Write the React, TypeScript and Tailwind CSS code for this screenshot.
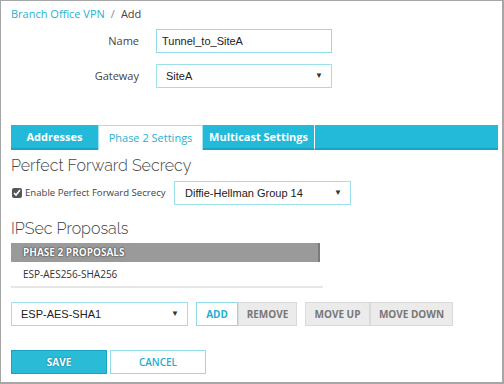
import React from "react";

const Caret = () => (
  <span className="text-[8px] text-[#333] leading-none">▼</span>
);

function Select({ value, w, className = "" }: { value: string; w: string; className?: string }) {
  return (
    <div
      className={`${w} ${className} h-[24px] border border-[#9ddfeb] bg-white flex items-center justify-between pl-[9px] pr-[8px] text-[11px] text-[#222]`}
      style={{ fontFamily: '"Liberation Sans", Arial, sans-serif' }}
    >
      <span>{value}</span>
      <Caret />
    </div>
  );
}

export default function App() {
  const os = { fontFamily: '"Open Sans", "Noto Sans", sans-serif' };
  const lato = { fontFamily: 'Raleway, Lato, "Open Sans", sans-serif' };
  return (
    <div
      className="w-[504px] h-[384px] bg-white border-t border-l border-r-2 border-b-2 border-[#a6a6a6] flex flex-col pl-[10px] text-[#333]"
      style={os}
    >
      <div className="h-[26px] flex items-center text-[11px] pt-[1px]">
        <span className="text-[#27b2d0]">Branch Office VPN</span>
        <span className="text-[#888] mx-[6px]">/</span>
        <span className="text-[#444]">Add</span>
      </div>

      <div className="flex items-center mt-[2px]">
        <div className="w-[128px] text-right text-[11px] text-[#444]">Name</div>
        <div
          className="ml-[17px] w-[176px] h-[24px] border border-[#8fdbe9] flex items-center pl-[5px] text-[11px] text-[#222]"
          style={{ fontFamily: '"Liberation Sans", Arial, sans-serif' }}
        >
          Tunnel_to_SiteA
        </div>
      </div>
      <div className="flex items-center mt-[11px]">
        <div className="w-[128px] text-right text-[11px] text-[#444]">Gateway</div>
        <Select value="SiteA" w="w-[176px]" className="ml-[17px] pl-[8px]" />
      </div>

      <div className="mt-[37px] w-[487px] h-[25px] flex text-[11px] font-bold">
        <div className="w-[87px] bg-[#22bad8] border-b-2 border-[#16a6c4] text-white flex items-center justify-center pt-[1px]">
          Addresses
        </div>
        <div className="w-[105px] bg-white border-t border-x border-[#a6e2ee] text-[#2ab0cf] font-normal flex items-center justify-center">
          Phase 2 Settings
        </div>
        <div className="w-[111px] bg-[#22bad8] border-b-2 border-[#16a6c4] text-white flex items-center justify-center pt-[1px]">
          Multicast Settings
        </div>
        <div className="flex-1 bg-[#22bad8] border-b-2 border-l border-l-white border-b-[#16a6c4]" />
      </div>

      <div className="mt-[6px] text-[16px] font-light text-[#444] leading-[20px]" style={lato}>
        Perfect Forward Secrecy
      </div>
      <div className="mt-[5px] flex items-center">
        <input type="checkbox" checked readOnly className="w-[10px] h-[10px] m-0 ml-[1px] accent-[#555]" />
        <span className="ml-[3px] w-[149px] text-[9.6px] text-[#444] whitespace-nowrap">Enable Perfect Forward Secrecy</span>
        <Select value="Diffie-Hellman Group 14" w="w-[177px]" className="pl-[10px]" />
      </div>

      <div className="mt-[14px] text-[16px] font-light text-[#444] leading-[20px]" style={lato}>
        IPSec Proposals
      </div>
      <div className="mt-[4px] w-[309px] h-[19px] bg-[#9a9a9a] border-r-2 border-[#7a7a7a] flex items-center pl-[12px] text-[10px] font-bold text-white"
        style={{ ...os, textShadow: "0 0 2px #333, 0 0 1px #333" }}>
        PHASE 2 PROPOSALS
      </div>
      <div className="w-[312px] h-[26px] border-b-2 border-[#e6e6e6] flex items-center pl-[12px] text-[10px] text-[#333]">
        ESP-AES256-SHA256
      </div>

      <div className="mt-[14px] flex items-center">
        <Select value="ESP-AES-SHA1" w="w-[177px]" className="pl-[9px]" />
        <div className="ml-[8px] flex text-[10px] font-bold h-[24px]">
          <div className="w-[42px] border border-[#8fdbe9] text-[#23b0d0] flex items-center justify-center">ADD</div>
          <div className="w-[59px] bg-[#ebebeb] border border-[#dadada] text-[#777] flex items-center justify-center">REMOVE</div>
        </div>
        <div className="ml-[8px] flex text-[10px] font-bold h-[24px]">
          <div className="w-[65px] bg-[#ebebeb] border border-[#dadada] text-[#777] flex items-center justify-center">MOVE UP</div>
          <div className="w-[83px] bg-[#ebebeb] border border-[#dadada] text-[#777] flex items-center justify-center">MOVE DOWN</div>
        </div>
      </div>

      <div className="mt-[24px] flex text-[10px] font-bold h-[24px]">
        <div className="w-[96px] bg-[#2abcd6] border border-[#1aa3c0] text-white flex items-center justify-center"
          style={{ textShadow: "0 0 2px #0a6b80" }}>
          SAVE
        </div>
        <div className="ml-[3px] w-[96px] border border-[#8fdbe9] text-[#23b0d0] flex items-center justify-center font-semibold">
          CANCEL
        </div>
      </div>
    </div>
  );
}
